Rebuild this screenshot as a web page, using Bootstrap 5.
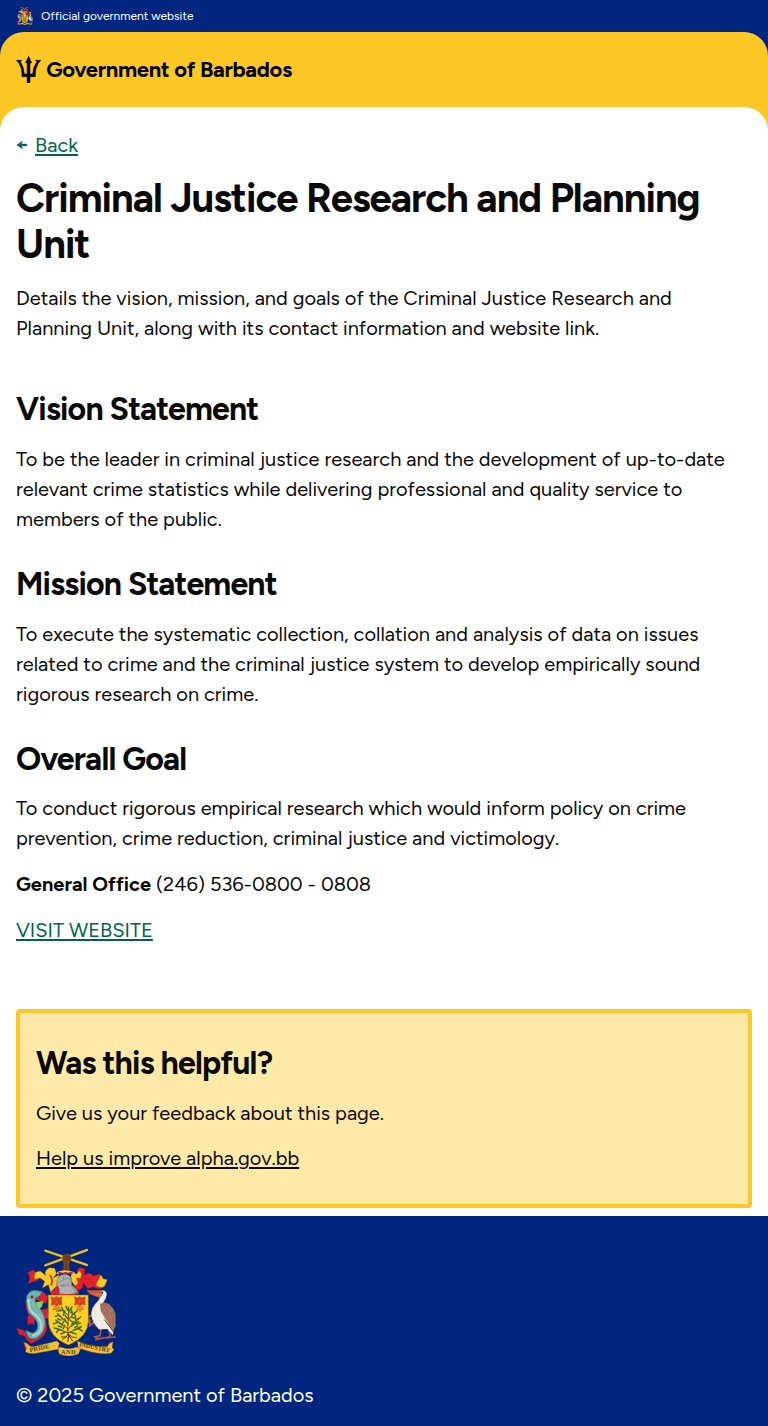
<!DOCTYPE html>
<html lang="en">
<head>
<meta charset="utf-8">
<meta name="viewport" content="width=device-width, initial-scale=1">
<title>Criminal Justice Research and Planning Unit</title>
<link href="https://cdn.jsdelivr.net/npm/bootstrap@5.3.0/dist/css/bootstrap.min.css" rel="stylesheet">
<script src="https://cdn.jsdelivr.net/npm/bootstrap@5.3.0/dist/js/bootstrap.bundle.min.js" defer></script>
<style>
body{font-family:Figtree,Lato,sans-serif;font-size:20px;line-height:30px;color:#0a0a0a;background:#fff}
.navy{background:#00267f;color:#fff}
.official{height:32px;font-size:12px;line-height:16px}
.brand-wrap{background:#ffc726;border-radius:24px 24px 0 0;height:75px;padding-top:24px}
.brand-name{font-size:22px;line-height:27px;font-weight:700;color:#000;letter-spacing:-.32px;margin-left:5px}
.sheet-bg{background:#ffc726}
.sheet{background:#fff;border-radius:24px 24px 0 0;padding-top:23px;height:1109px}
.back-arrow{margin-right:7px}
.plain-link{text-underline-offset:2px;text-decoration-thickness:2px}
.green{color:#00654a}
h1{font-size:40px;line-height:46px;font-weight:700;letter-spacing:-1px;margin:15px 0 16px}
h2{font-size:32px;line-height:36.8px;font-weight:700;letter-spacing:-.8px;margin:32px 0 16px}
p{margin:0 0 16px}
.feedback{background:#ffe9a8;border:4px solid #ffc726;border-radius:4px;height:199px;margin-top:64px;padding:32px 16px 0}
.feedback p{margin-bottom:14.8px}
.foot{height:210px;padding-top:32px}
</style>
</head>
<body>
<header class="navy">
  <div class="official d-flex align-items-center px-3">
    <svg width="17" height="18" viewBox="24 24 303 324" aria-hidden="true"><use href="#arms"/></svg>
    <span class="ms-2">Official government website</span>
  </div>
  <div class="brand-wrap px-3">
    <div class="d-flex align-items-center">
      <svg width="25.3" height="27.3" viewBox="48 168 76 82" aria-hidden="true"><path stroke="#000" stroke-width="1.600" d="M81.500 249V230H66Q67 205 57 190L49 181L65 181L61 186Q71 198 73 222H81.500V189L77 188L85.800 169L95 188L90 189V222H98Q100 198 111 186L107 181L123 181L115 190Q105 205 106 230H90V249Z"/></svg>
      <span class="brand-name text-nowrap">Government of Barbados</span>
    </div>
  </div>
</header>
<div class="sheet-bg">
<main class="sheet px-3">
  <div class="d-flex align-items-center">
    <svg width="12" height="10" viewBox="0 0 12 10" class="back-arrow" aria-hidden="true"><path d="M.8 5L6.300 1.200 5.500 4.100H10.800V5.900H5.500L6.300 8.800Z" fill="#0e5f64" stroke="#0e5f64" stroke-width=".5"/></svg>
    <a href="#" class="plain-link green">Back</a>
  </div>
  <h1>Criminal Justice Research and Planning Unit</h1>
  <p>Details the vision, mission, and goals of the Criminal Justice Research and Planning Unit, along with its contact information and website link.</p>
  <h2 class="mt-5">Vision Statement</h2>
  <p>To be the leader in criminal justice research and the development of up-to-date relevant crime statistics while delivering professional and quality service to members of the public.</p>
  <h2>Mission Statement</h2>
  <p>To execute the systematic collection, collation and analysis of data on issues related to crime and the criminal justice system to develop empirically sound rigorous research on crime.</p>
  <h2>Overall Goal</h2>
  <p>To conduct rigorous empirical research which would inform policy on crime prevention, crime reduction, criminal justice and victimology.</p>
  <p><b>General Office</b> (246) 536-0800 - 0808</p>
  <p><a href="#" class="plain-link green">VISIT WEBSITE</a></p>
  <section class="feedback">
    <h2 class="mt-0">Was this helpful?</h2>
    <p>Give us your feedback about this page.</p>
    <p><a href="#" class="plain-link text-reset">Help us improve alpha.gov.bb</a></p>
  </section>
</main>
</div>
<footer class="navy px-3 foot">
  <svg class="d-block" width="101" height="108" viewBox="24 24 303 324" role="img" aria-label="Coat of arms of Barbados">
    <g id="arms" stroke-linejoin="round" stroke-linecap="round">
      <!-- crossed sugar canes held in a fist -->
      <g stroke="#8a6a16" stroke-width="8"><path d="M112 32L237 75M237 30L112 76"/></g>
      <g stroke="#edc02c" stroke-width="6"><path d="M112 32L237 75M237 30L112 76"/></g>
      <path d="M167 44Q176 37 186 44L189 58L184 72L186 98H164L166 72L163 57Z" fill="#744520" stroke="#4a2d17" stroke-width="1"/>
      <path d="M169 50H184M169 57H185M175 70V95" stroke="#4a2a14" stroke-width="1.500" fill="none"/>
      <!-- mantling -->
      <g fill="#e3212b" stroke="#5d1a26" stroke-width="1">
        <path d="M60 132L66 113L58 97L76 90L92 105L98 113L86 122L74 126Z"/>
        <path d="M188 110Q197 99 211 104Q202 91 215 82L231 87L230 105Q244 93 257 108Q275 97 284 109L267 124Q280 132 292 122L288 142Q274 151 255 140L240 147L226 130L224 143L210 152Q192 136 188 110Z"/>
        <path d="M127 157L139 150L147 131L158 152L172 164H130Z"/>
      </g>
      <g fill="#fccc22" stroke="#76601d" stroke-width="1">
        <path d="M80 118Q74 93 98 94L114 107Q106 93 124 83L140 85L146 101L135 113L153 105L149 134L128 157L121 134L103 144L110 124L96 114Z"/>
        <path d="M268 124Q275 112 279 105L285 116L298 119L290 138Q278 146 264 136Z"/>
        <path d="M189 106L196 96L206 103L213 92L222 102L217 115L205 114L211 130L202 137L190 123Z"/>
      </g>
      <path d="M126 106Q136 119 130 134M224 106L219 121L237 127L254 130" fill="none" stroke="#d5262c" stroke-width="5"/>
      <path d="M226 92Q219 102 226 114L246 120" fill="none" stroke="#8e1d27" stroke-width="1.500"/>
      <!-- helmet -->
      <path d="M151 99Q170 90 193 99" stroke="#f8cb2b" stroke-width="8" fill="none"/>
      <path d="M153 99H193" stroke="#d52a2b" stroke-width="6" stroke-dasharray="7 9"/>
      <path d="M146 132Q145 106 167 103Q187 103 191 119V134Q206 145 212 160Q188 171 153 163Q158 148 146 132Z" fill="#b0b0b0" stroke="#60636b" stroke-width="1.500"/>
      <path d="M151 128L178 115L190 118L180 132L156 137M160 139L191 137L204 155M168 107L165 119" fill="none" stroke="#777a80" stroke-width="2"/>
      <path d="M154 162Q184 170 211 157" fill="none" stroke="#ec2d34" stroke-width="4"/>
      <!-- dolphin -->
      <path d="M26 264L45 270L61 281L78 286Q57 313 59 299L48 287L34 285ZM78 151L105 154L120 171L114 191L95 184L82 176ZM93 210L119 205L126 234L103 239L92 226ZM111 240Q128 272 95 298L70 311L51 297L59 280L91 273ZM60 226L78 233L76 250L58 254Z" fill="#d71f35" stroke="#761b2e" stroke-width="1"/>
      <path d="M55 177Q56 154 79 151L102 155L96 167L82 174L82 187Q108 216 112 244Q113 277 87 294Q68 302 59 287L53 270L75 281Q94 270 87 247Q82 232 64 222Q51 204 55 177Z" fill="#62b8b2" stroke="#276e7d" stroke-width="1.500"/>
      <path d="M62 181Q60 208 79 222Q105 241 98 268Q90 286 71 286" fill="none" stroke="#a3ddcf" stroke-width="8" stroke-dasharray="1.500 7"/>
      <path d="M73 184Q77 205 95 221Q111 242 102 275" fill="none" stroke="#d9a5a3" stroke-width="3"/>
      <path d="M56 190Q54 222 79 237L76 252" fill="none" stroke="#db243b" stroke-width="4"/>
      <path d="M83 187L107 183L101 202L92 206Z" fill="#8fcf58"/><circle cx="72" cy="171" r="5" fill="#e62c35"/><circle cx="72" cy="171" r="2"/>
      <!-- pelican -->
      <path d="M252 224L237 236L247 242L232 247L248 249L244 258L261 245M279 265L276 287L259 291L270 294L263 299L289 293M303 273L307 288L293 294L321 291" fill="none" stroke="#b7563f" stroke-width="5"/>
      <path d="M273 190Q307 178 322 220L323 257L312 281L298 265L281 235Z" fill="#a97b66" stroke="#664437" stroke-width="1"/>
      <path d="M276 153Q296 148 296 164Q294 178 284 190L290 210L301 254L317 273L314 285L298 267L273 268Q254 250 250 227Q248 203 272 181L277 170Z" fill="#f1ede2" stroke="#a19890" stroke-width="1"/>
      <path d="M276 191Q292 186 306 200L322 222L319 260L294 240L278 213Z" fill="#a06b58"/>
      <path d="M285 200L304 244M298 201L312 244M307 211L320 237M282 214L298 243" stroke="#bd8a70" stroke-width="2"/>
      <path d="M290 240L317 276" stroke="#473936" stroke-width="3"/>
      <path d="M279 151L236 151L245 162L275 173L284 160Z" fill="#df673d" stroke="#8c3b30" stroke-width="1.500"/><path d="M244 156H276" stroke="#8a3c33" stroke-width="2"/><circle cx="284" cy="158" r="2"/>
      <!-- shield -->
      <path d="M121 165H241V240Q241 291 181 315Q121 291 121 240Z" fill="#ffd021" stroke="#7b671b" stroke-width="1.500"/>
      <g id="flower"><path d="M129 170L140 174L145 169L151 174L162 170L160 181L162 195L152 193L146 198L139 193L129 196L132 183Z" fill="#d63a20" stroke="#a32b18" stroke-width="1"/><path d="M137 177L153 190M154 177L137 191M145 173V192" stroke="#ef6a24" stroke-width="1.500"/><path d="M137 197L142 203L134 209L142 208L146 216L150 208L158 208L151 203L154 197" fill="#ed8728" stroke="#b5491b" stroke-width="1.500"/></g>
      <use href="#flower" x="70"/>
      <path d="M181 200Q184 223 180 245Q178 269 181 289M181 226L163 211M181 239L201 216M180 252L153 226M179 266L146 243M179 269L211 235M180 279L146 265M181 278L219 263" fill="none" stroke="#5b4a1c" stroke-width="3"/>
      <path d="M180 211L174 199M183 214L192 201M168 217L161 202M163 211L151 213M193 225L207 213M195 224L190 210M164 236L149 221M154 226L142 229M161 253L143 240M151 247L136 251M192 256L212 245M201 246L218 231M204 242L201 224M160 271L139 264M154 268L146 277M198 270L220 260M210 266L223 273M168 243L161 256M171 226L179 236M191 232L204 235M190 259L196 245M171 276L159 282M187 276L204 282M171 212L166 226M188 217L198 222M149 237L158 240M170 256L165 266M206 252L217 250M200 263L209 258M186 240L193 246M174 246L170 237M151 258L160 261" stroke="#42702c" stroke-width="4.500"/>
      <path d="M181 281Q178 291 164 298M182 284L180 305M183 287L194 303M184 285Q192 294 205 293M176 291L160 291" fill="none" stroke="#54351b" stroke-width="3"/>
      <!-- motto ribbon -->
      <path d="M48 315L57 309L66 316V331H53ZM298 315L306 307L313 314L309 336L299 333Z" fill="#d52c29"/>
      <path d="M47 306L58 311Q65 323 83 319L147 303L154 310L150 328L84 340Q64 343 52 335L56 325ZM150 325L158 321Q181 331 207 321L218 326L211 342Q182 354 154 342ZM208 303Q238 317 268 319L298 320L305 310L315 305L312 322L318 329L309 340Q278 343 250 336L211 324Z" fill="#f4bd35" stroke="#7d6119" stroke-width="1"/>
      <g font-family="Liberation Serif,serif" font-size="19" font-weight="700" fill="#4c3d17">
        <text transform="translate(66 337) rotate(-12)" textLength="60">PRIDE</text>
        <text x="159" y="343" textLength="44">AND</text>
        <text transform="translate(213 318) rotate(12)" textLength="94" lengthAdjust="spacingAndGlyphs">INDUSTRY</text>
      </g>
    </g>
  </svg>
  <div class="mt-4">© 2025 Government of Barbados</div>
</footer>
</body>
</html>
